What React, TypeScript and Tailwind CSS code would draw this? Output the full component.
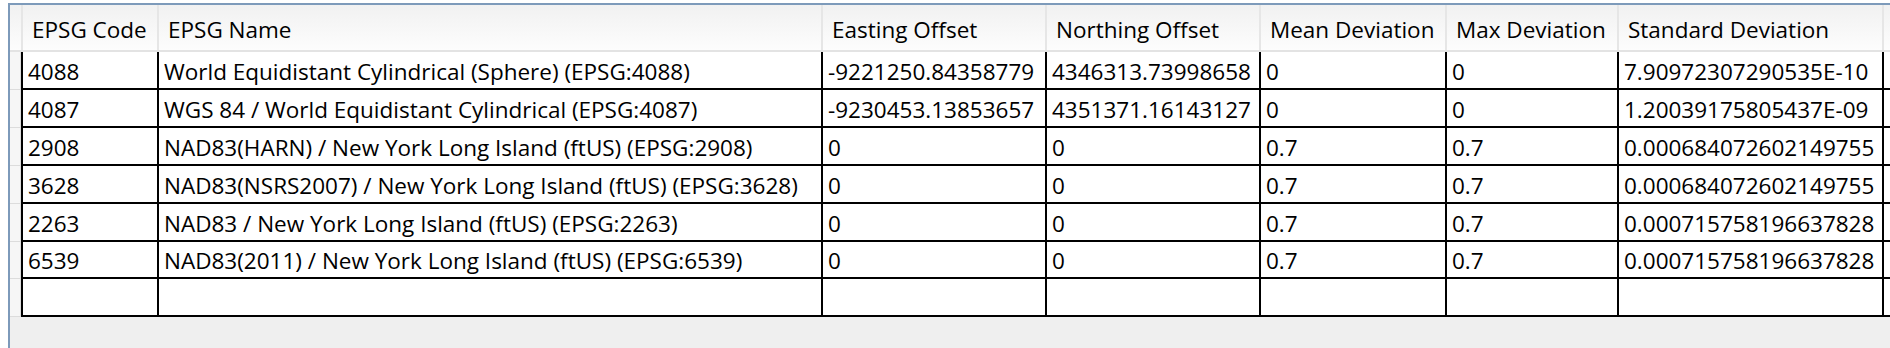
const columns = [
  "EPSG Code",
  "EPSG Name",
  "Easting Offset",
  "Northing Offset",
  "Mean Deviation",
  "Max Deviation",
  "Standard Deviation",
];

const rows: string[][] = [
  ["4088", "World Equidistant Cylindrical (Sphere) (EPSG:4088)", "-9221250.84358779", "4346313.73998658", "0", "0", "7.90972307290535E-10"],
  ["4087", "WGS 84 / World Equidistant Cylindrical (EPSG:4087)", "-9230453.13853657", "4351371.16143127", "0", "0", "1.20039175805437E-09"],
  ["2908", "NAD83(HARN) / New York Long Island (ftUS) (EPSG:2908)", "0", "0", "0.7", "0.7", "0.000684072602149755"],
  ["3628", "NAD83(NSRS2007) / New York Long Island (ftUS) (EPSG:3628)", "0", "0", "0.7", "0.7", "0.000684072602149755"],
  ["2263", "NAD83 / New York Long Island (ftUS) (EPSG:2263)", "0", "0", "0.7", "0.7", "0.000715758196637828"],
  ["6539", "NAD83(2011) / New York Long Island (ftUS) (EPSG:6539)", "0", "0", "0.7", "0.7", "0.000715758196637828"],
  ["", "", "", "", "", "", ""],
];

// row heights as measured; 6th row is one pixel shorter
const rowHeights = ["h-[38px]", "h-[38px]", "h-[38px]", "h-[38px]", "h-[38px]", "h-[37px]", "h-[38px]"];

const grid = "grid grid-cols-[13px_136px_664px_224px_214px_186px_172px_265px_1fr]";

export default function App() {
  return (
    <div className="h-[348px] w-[1890px] overflow-hidden bg-white pl-[8px] pt-[3px] font-['Open_Sans',sans-serif] text-[22.5px] text-black">
      <div className="flex h-full flex-col border-l-2 border-t-2 border-[#7d9aba] bg-[#efefef]">
        <div className={`${grid} h-[47px] border-b-2 border-[#e3e3e3] bg-linear-to-b from-[#f1f1f1] to-[#fdfdfd]`}>
          <div className="border-r-2 border-[#e6e6e6]" />
          {columns.map((c) => (
            <div key={c} className="flex items-center border-r-2 border-[#e6e6e6] pt-[5px] pl-[9px] whitespace-nowrap">
              <span className="leading-[30px]">{c}</span>
            </div>
          ))}
          <div />
        </div>

        {rows.map((r, i) => (
          <div key={i} className={`${grid} ${rowHeights[i]}`}>
            <div className="flex">
              <div className="w-[11px] border-r border-b border-[#dcdcdc] bg-[#f6f6f6]" />
              <div className="w-[2px] bg-black" />
            </div>
            {r.map((v, j) => (
              <div key={j} className="flex items-center overflow-hidden border-r-2 border-b-2 border-black bg-white pt-[3px] pl-[5px] leading-[30px] whitespace-nowrap">
                {v}
              </div>
            ))}
            <div className="border-b-2 border-black bg-white" />
          </div>
        ))}
      </div>
    </div>
  );
}
